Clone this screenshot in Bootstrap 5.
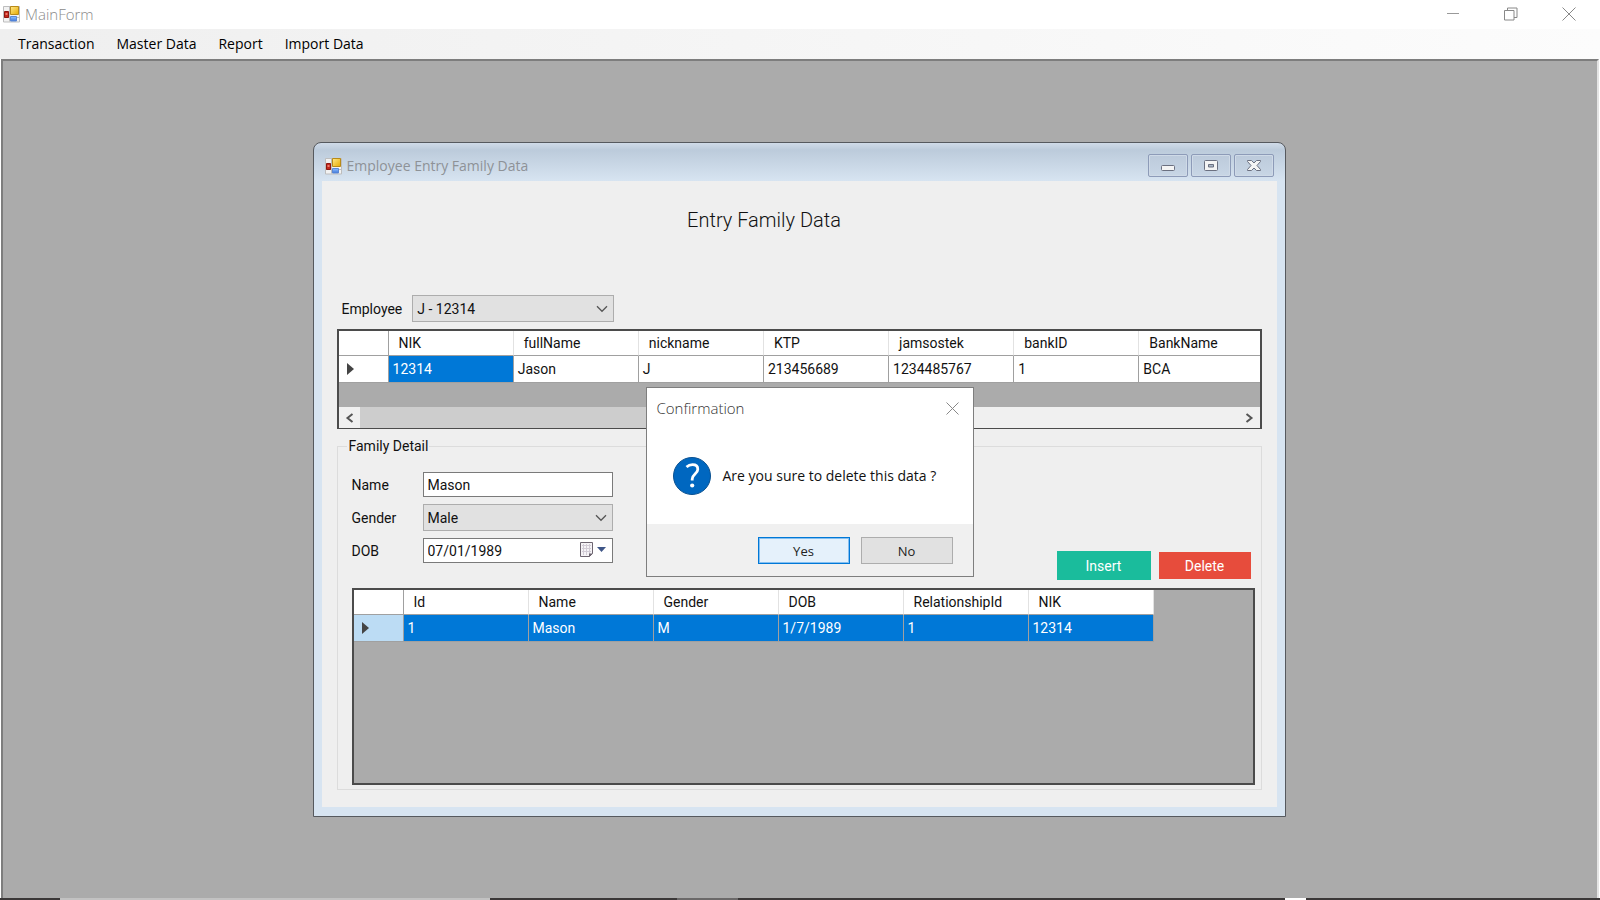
<!DOCTYPE html>
<html lang="en">
<head>
<meta charset="utf-8">
<meta name="viewport" content="width=device-width, initial-scale=1">
<title>MainForm</title>
<link href="https://cdn.jsdelivr.net/npm/bootstrap@5.3.0/dist/css/bootstrap.min.css" rel="stylesheet">
<style>
  :root { --face: #efefef; --workspace: #ababab; --accent: #0078d7; }
  body { font-family: Roboto, "Liberation Sans", sans-serif; font-size: 14px; line-height: 18px; color: #111; background: #fff; }
  .shell-font { font-family: "Open Sans", "Noto Sans", sans-serif; }
  .app-title { height: 29px; color: #8a8a8a; padding: 0 2px 1px 3px; }
  .app-title .caption, .dialog-title { font-size: 15px; font-weight: 300; }
  .glyph-btn { border: 0; background: none; padding: 0; display: flex; align-items: center; justify-content: center; }
  .app-title .glyph-btn { width: 58px; height: 28px; }
  .menu-strip { height: 30px; padding-left: 7px; background: linear-gradient(90deg, #efefef, #fcfcfc); }
  .menu-strip .nav-link { color: #000; padding: 6px 11px; }
  .workspace { background: var(--workspace); border: 2px solid #7d7d7d; border-right-color: #e4e4e4; border-bottom: 0; margin: 0 1px; padding: 81px 2px 0 0; }
  .taskbar { height: 2px; background: #3b3838; }
  .child-window { width: 973px; max-width: 100%; padding: 0 8px 9px; border: 1px solid #56595e; border-radius: 8px 8px 0 0;
    background: linear-gradient(#d0dbe8 0, #bccbdb 7px, #d7e4f1 38px); }
  .child-title { height: 38px; padding: 7px 3px 0; color: #8e9297; }
  .child-title .caption { line-height: 32px; }
  .frame-btn { width: 40px; height: 23px; padding: 0; border: 1px solid #8d9bb8; border-radius: 2px; background: linear-gradient(#bccadb, #c8d6e5); box-shadow: inset 0 0 0 1px #cfdae7; display: flex; align-items: center; justify-content: center; }
  .client { background: var(--face); padding: 27px 15px 17px; }
  .form-heading { font-size: 20px; line-height: 24px; font-weight: 300; margin: 0 70px 63px 0; }
  .form-control, .form-select { font-size: 14px; line-height: 18px; color: #111; border-radius: 0; padding: 3px 4px; height: 25px; border: 1px solid #7a7a7a; }
  .form-select { background-color: #e1e1e1; border-color: #adadad; height: 27px;
    background-image: url("data:image/svg+xml,%3Csvg xmlns='http://www.w3.org/2000/svg' viewBox='0 0 12 8'%3E%3Cpath fill='none' stroke='%23555' stroke-width='1.3' d='M1 1.3 6 6.3 11 1.3'/%3E%3C/svg%3E");
    background-size: 12px 8px; background-position: right 5px center; }
  .employee-row { padding-left: 5px; margin-bottom: 7px; gap: 10px; }
  .employee-select { width: 202px; }
  .data-grid { border: 2px solid #4b4b4b; border-bottom-width: 1px; background: var(--workspace); overflow: hidden; }
  .data-grid table { table-layout: fixed; width: 100%; border-collapse: separate; border-spacing: 0; }
  .data-grid .wide-table { width: 926px; }
  .data-grid .family-table { width: 800px; }
  .data-grid th { height: 25px; padding: 0 10px; font-weight: 400; background: #fff; border-right: 1px solid #e2e2e2; border-bottom: 1px solid #a0a0a0; }
  .data-grid td { height: 27px; padding: 0 4px; background: #fff; border-right: 1px solid #a0a0a0; border-bottom: 1px solid #a0a0a0; }
  .data-grid .row-head { padding: 0 8px; border-right-color: #a0a0a0; }
  .data-grid td.picked { background: var(--accent); color: #fff; }
  .data-grid td.row-head.row-picked { background: #bcdcf4; }
  .col-head { width: 50px; } .col-data { width: 125px; }
  .scroll-track { height: 21px; margin-top: 24px; background: #f0f0f0; }
  .scroll-track .glyph-btn { width: 21px; }
  .scroll-thumb { width: 440px; background: #cdcdcd; }
  .family-box { margin-top: 8px; border: 1px solid #dcdcdc; padding: 17px 6px 4px 14px; }
  .family-box legend { float: none; width: auto; font-size: 14px; line-height: 18px; margin: 0 0 0 -5px; padding: 0 1px 0 2px; }
  .family-fields { width: 261px; gap: 7px; margin-bottom: 17px; }
  .family-fields label { width: 71px; flex: none; }
  .date-drop { position: absolute; right: 6px; top: 3px; }
  .flat-btn { border: 0; border-radius: 0; color: #fff; width: 92px; height: 27px; padding: 0; font-size: 14px; line-height: 18px; }
  .insert-btn { background: #1abc9c; width: 94px; height: 29px; }
  .delete-btn { background: #e74c3c; }
  .family-grid { height: 197px; margin-top: 8px; border-bottom-width: 2px; }
  .confirm-dialog { position: absolute; left: 332px; top: 244px; width: 328px; background: #fff; border: 1px solid #7e7e7e; font-size: 14px; }
  .dialog-title { color: #333; padding: 11px 10px; }
  .dialog-body { height: 96px; padding: 0 26px; }
  .dialog-foot { background: #f0f0f0; padding: 13px 20px 12px; gap: 11px; }
  .dialog-foot .btn { width: 92px; height: 27px; padding: 0; font-size: 13px; line-height: 18px; border-radius: 0; color: #222; background: #e1e1e1; border: 1px solid #adadad; }
  .dialog-foot .btn-default { background: #e5f1fb; border: 1px solid var(--accent); box-shadow: inset 0 0 0 1px #85bff0; }
</style>
</head>
<body class="min-vh-100 d-flex flex-column">
<svg width="0" height="0" class="position-absolute" aria-hidden="true">
  <defs>
    <linearGradient id="gold" x2="1" y2="1"><stop stop-color="#ffe98a"/><stop offset="1" stop-color="#e8aa00"/></linearGradient>
    <linearGradient id="sky" y2="1" x2="0"><stop stop-color="#8fc0ff"/><stop offset="1" stop-color="#3f78dc"/></linearGradient>
    <symbol id="form-icon" viewBox="0 0 18 18">
      <path fill="#f2f2f2" stroke="#bdbdbd" d="M.5 1.500h16v15.500H.5zM6.500 1.500v15M.5 12.500h16"/>
      <path fill="#c2281c" stroke="#8f1710" d="M1.500 6.500h4v6h-4z"/><path fill="#ef7b6d" d="M2.500 8h2v2h-2z"/>
      <path fill="url(#gold)" stroke="#b88a18" d="M7.500 1.500h8v8h-8z"/>
      <path fill="url(#sky)" stroke="#5b87d4" d="M7.500 11.500h6v4.500h-6z"/>
    </symbol>
  </defs>
</svg>

<header class="shell-font">
  <div class="app-title d-flex align-items-center">
    <svg class="me-1" width="18" height="18"><use href="#form-icon"/></svg>
    <span class="caption flex-grow-1">MainForm</span>
    <button class="glyph-btn" aria-label="Minimize"><svg width="14" height="14" fill="none" stroke="#999"><path d="M1 6.500h12"/></svg></button>
    <button class="glyph-btn" aria-label="Restore"><svg width="14" height="14" fill="none" stroke="#888"><path d="M.5 3.500h9.500v9.500H.5zM3.500 3.500V1h9.500v9.500h-3"/></svg></button>
    <button class="glyph-btn" aria-label="Close"><svg width="14" height="14" fill="none" stroke="#888"><path d="m.5.5 13 13M13.500.5l-13 13"/></svg></button>
  </div>
  <nav class="menu-strip nav">
    <a class="nav-link" href="#">Transaction</a>
    <a class="nav-link" href="#">Master Data</a>
    <a class="nav-link" href="#">Report</a>
    <a class="nav-link" href="#">Import Data</a>
  </nav>
</header>

<main class="workspace flex-grow-1 d-flex justify-content-center align-items-start">
  <section class="child-window position-relative">
    <div class="child-title d-flex align-items-start">
      <svg class="me-1 mt-1" width="18" height="24"><use href="#form-icon"/></svg>
      <span class="caption shell-font flex-grow-1">Employee Entry Family Data</span>
      <div class="d-flex mt-1" style="gap:3px">
        <button class="frame-btn" aria-label="Minimize"><svg width="16" height="14"><rect x="1.500" y="6.500" width="13" height="5" rx="1" fill="#f4f4f4" stroke="#6b7080"/></svg></button>
        <button class="frame-btn" aria-label="Maximize"><svg width="16" height="14" fill="#f4f4f4" stroke="#6b7080"><rect x="1.500" y="1.500" width="13" height="10" rx="1"/><path fill="#aab6c6" d="M5.500 5.500h5v2.500h-5z"/></svg></button>
        <button class="frame-btn" aria-label="Close"><svg width="16" height="14" fill="#f4f4f4" stroke="#6b7080"><path d="M1.500 1.500h4L8 4l2.500-2.500h4v1L11 6.500l3.500 4v1h-4L8 9l-2.500 2.500h-4v-1l3.500-4-3.500-4z"/></svg></button>
      </div>
    </div>

    <div class="client">
      <h1 class="form-heading text-center">Entry Family Data</h1>

      <div class="employee-row d-flex align-items-center">
        <label for="employee">Employee</label>
        <select class="form-select employee-select" id="employee"><option>J - 12314</option></select>
      </div>

      <div class="data-grid">
        <table class="wide-table">
          <colgroup><col class="col-head"><col class="col-data"><col class="col-data"><col class="col-data"><col class="col-data"><col class="col-data"><col class="col-data"><col class="col-data"></colgroup>
          <thead><tr><th class="row-head"></th><th>NIK</th><th>fullName</th><th>nickname</th><th>KTP</th><th>jamsostek</th><th>bankID</th><th>BankName</th></tr></thead>
          <tbody><tr>
            <td class="row-head"><svg class="d-block" width="8" height="12"><path fill="#444" d="M0 0l7 6-7 6z"/></svg></td>
            <td class="picked">12314</td><td>Jason</td><td>J</td><td>213456689</td><td>1234485767</td><td>1</td><td>BCA</td>
          </tr></tbody>
        </table>
        <div class="scroll-track d-flex">
          <button class="glyph-btn" aria-label="Scroll left"><svg width="9" height="10" fill="none" stroke="#555" stroke-width="2"><path d="M7.500 1 2.500 5l5 4"/></svg></button>
          <div class="scroll-thumb"></div>
          <button class="glyph-btn ms-auto" aria-label="Scroll right"><svg width="9" height="10" fill="none" stroke="#555" stroke-width="2"><path d="m1.500 1 5 4-5 4"/></svg></button>
        </div>
      </div>

      <fieldset class="family-box">
        <legend>Family Detail</legend>
        <div class="d-flex align-items-end justify-content-between">
          <div class="family-fields d-flex flex-column">
            <div class="d-flex align-items-center"><label for="name">Name</label><input class="form-control" id="name" value="Mason"></div>
            <div class="d-flex align-items-center"><label for="gender">Gender</label><select class="form-select" id="gender"><option>Male</option></select></div>
            <div class="d-flex align-items-center"><label for="dob">DOB</label>
              <div class="position-relative w-100">
                <input class="form-control" id="dob" value="07/01/1989">
                <button class="glyph-btn date-drop" type="button" aria-label="Open calendar"><svg width="28" height="18"><path fill="#f5f3f6" stroke="#6d6570" d="M1.500 1.500h12v11l-3 3h-9z"/><path stroke="#d2ccd6" fill="none" d="M3 4.500h9M3 7.500h9M3 10.500h9M4.500 3v11M7.500 3v11M10.500 3v10"/><path fill="#6d6570" d="M10 16v-3.500h4z"/><path fill="#3f5687" d="M18 6h9l-4.500 5z"/></svg></button>
              </div>
            </div>
          </div>
          <div class="d-flex align-items-center gap-2 pe-1">
            <button class="btn flat-btn insert-btn" type="button">Insert</button>
            <button class="btn flat-btn delete-btn" type="button">Delete</button>
          </div>
        </div>
        <div class="data-grid family-grid">
          <table class="family-table">
            <colgroup><col class="col-head"><col class="col-data"><col class="col-data"><col class="col-data"><col class="col-data"><col class="col-data"><col class="col-data"></colgroup>
            <thead><tr><th class="row-head"></th><th>Id</th><th>Name</th><th>Gender</th><th>DOB</th><th>RelationshipId</th><th>NIK</th></tr></thead>
            <tbody><tr>
              <td class="row-head row-picked"><svg class="d-block" width="8" height="12"><path fill="#444" d="M0 0l7 6-7 6z"/></svg></td>
              <td class="picked">1</td><td class="picked">Mason</td><td class="picked">M</td><td class="picked">1/7/1989</td><td class="picked">1</td><td class="picked">12314</td>
            </tr></tbody>
          </table>
        </div>
      </fieldset>
    </div>

    <div class="confirm-dialog shell-font" role="dialog" aria-labelledby="confirm-title">
      <div class="dialog-title d-flex align-items-center justify-content-between">
        <span id="confirm-title">Confirmation</span>
        <button class="glyph-btn me-1" aria-label="Close"><svg width="13" height="13" fill="none" stroke="#888"><path d="m.5.5 12 12M12.500.5l-12 12"/></svg></button>
      </div>
      <div class="dialog-body d-flex align-items-center">
        <svg class="flex-shrink-0 me-2" width="38" height="38" viewBox="0 0 38 38"><circle cx="19" cy="19" r="18.500" fill="#0067c0" stroke="#0a5191"/><path fill="none" stroke="#fff" stroke-width="2.800" d="M13.500 10c2-1.800 4-2.300 6-2.300 3.300 0 5.300 1.800 5.300 4.500 0 4.600-5.600 5-5.600 9.800V23.500"/><circle cx="19.200" cy="28.500" r="2.100" fill="#fff"/></svg>
        <span class="ms-1 text-nowrap">Are you sure to delete this data ?</span>
      </div>
      <div class="dialog-foot d-flex justify-content-end">
        <button class="btn btn-default" type="button">Yes</button>
        <button class="btn" type="button">No</button>
      </div>
    </div>
  </section>
</main>

<footer class="taskbar d-flex" aria-hidden="true">
  <span style="width:3.75%"></span><span style="width:26.9%;background:#c2c2c2"></span>
  <span style="width:11.65%"></span><span style="width:3.8%;background:#6b6969"></span>
  <span style="width:34.2%"></span><span style="width:1.35%;background:#fff"></span>
</footer>
<script src="https://cdn.jsdelivr.net/npm/bootstrap@5.3.0/dist/js/bootstrap.bundle.min.js"></script>
</body>
</html>
